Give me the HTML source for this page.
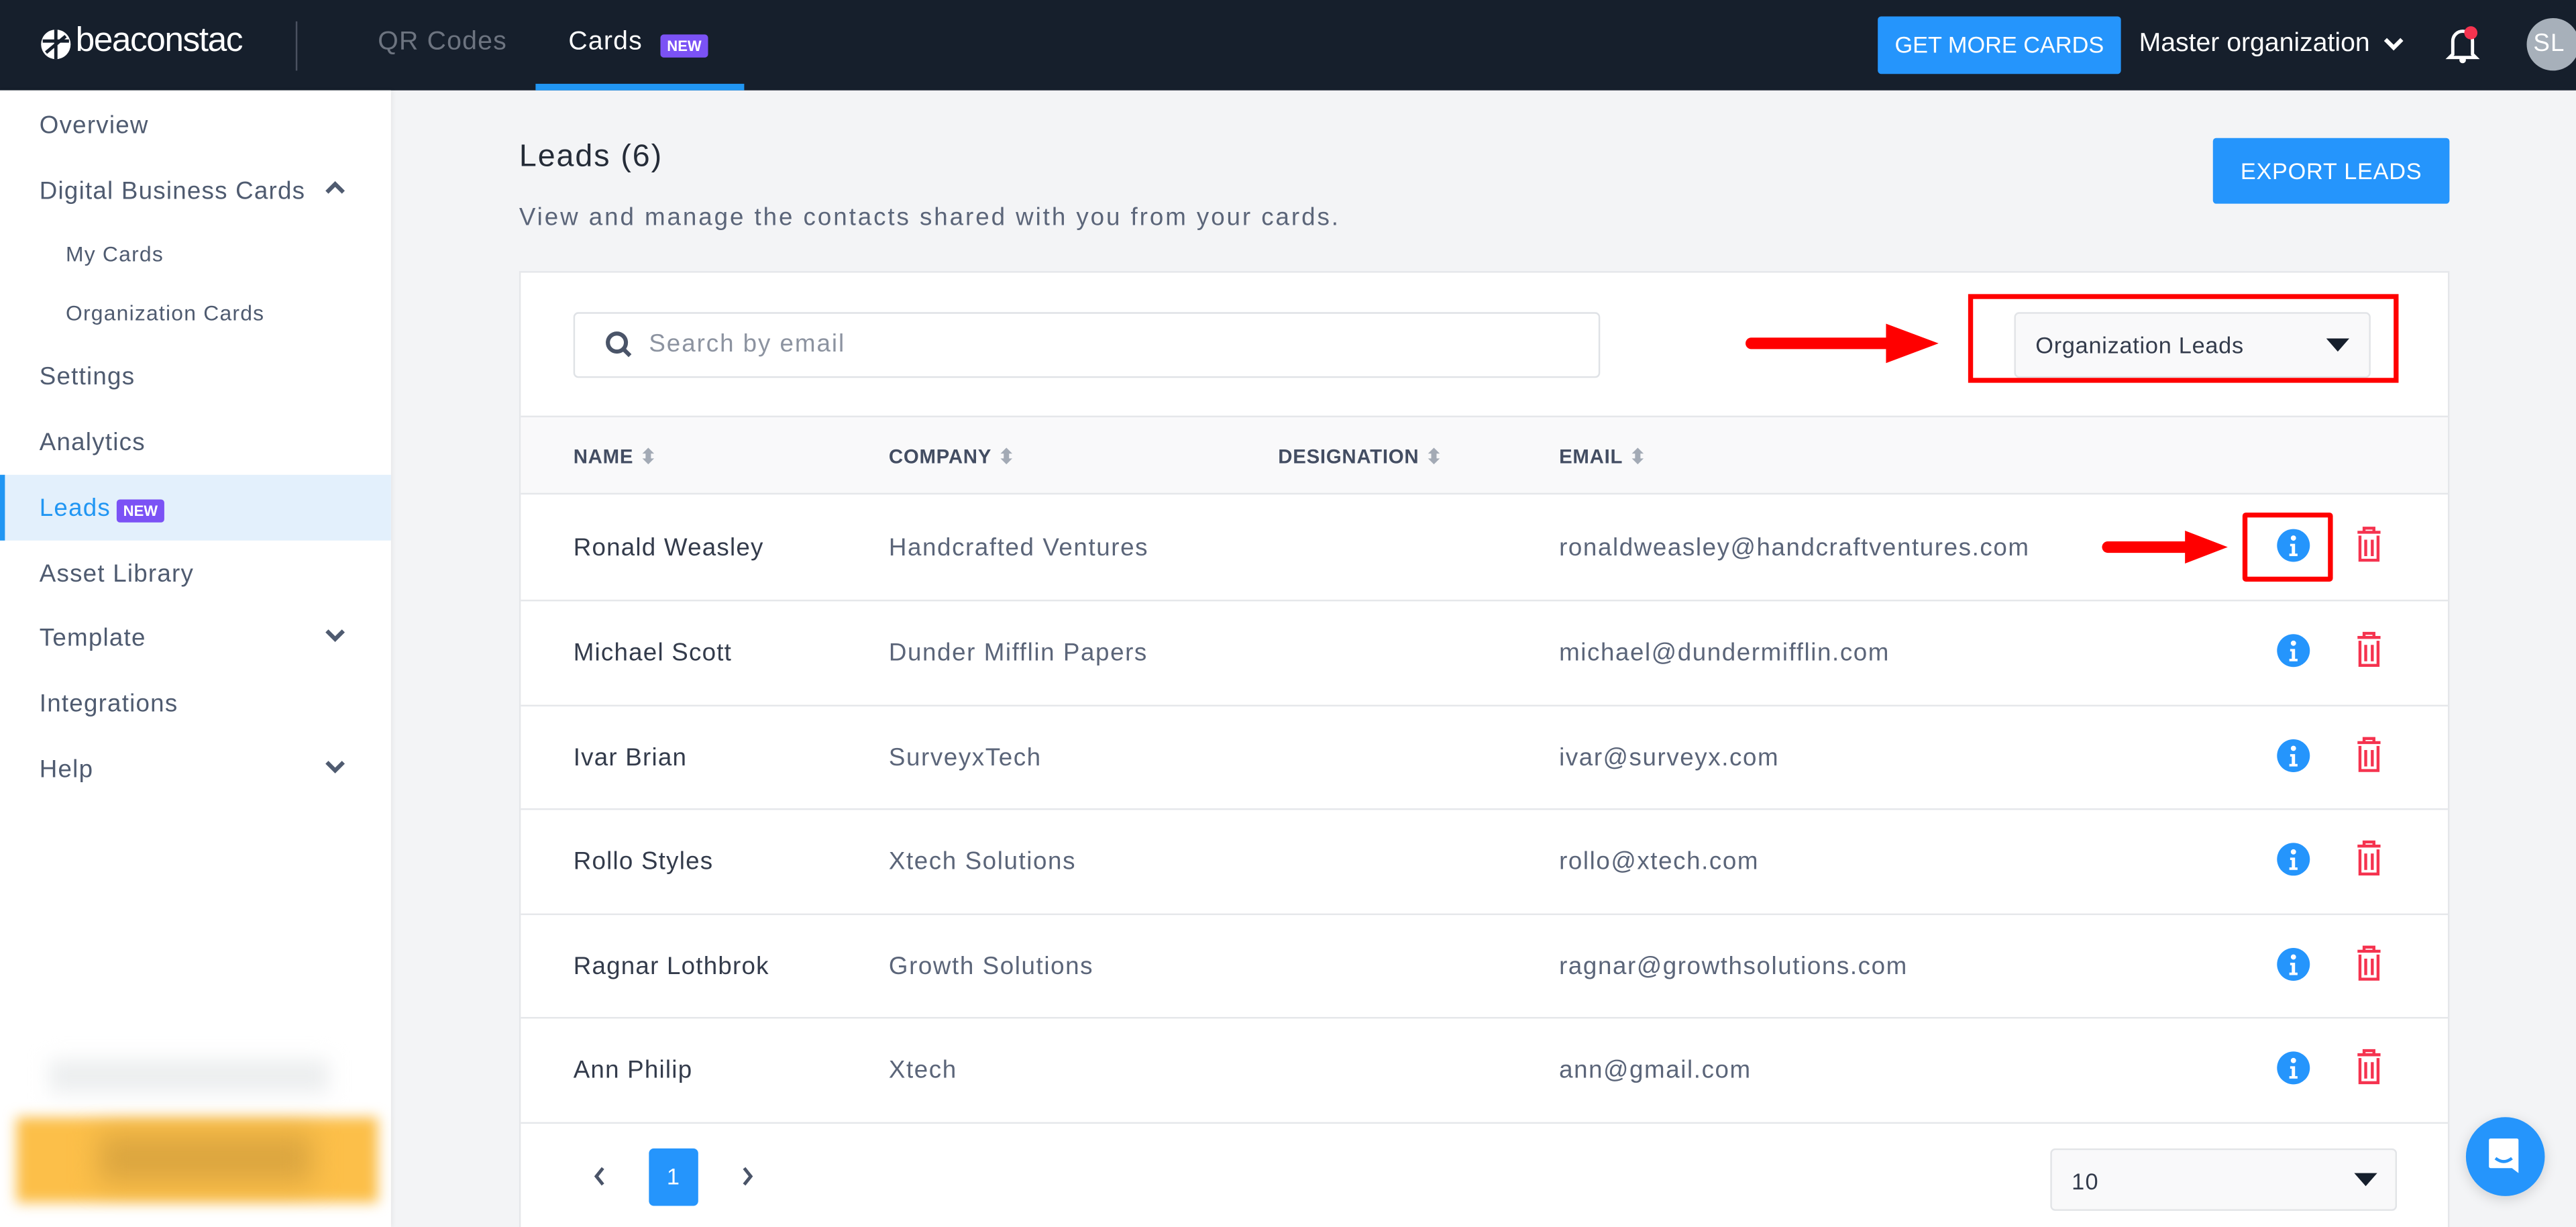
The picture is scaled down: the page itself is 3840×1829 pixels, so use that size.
<!DOCTYPE html>
<html><head><meta charset="utf-8"><style>
*{box-sizing:border-box;margin:0;padding:0}
html,body{width:3840px;height:1829px;overflow:hidden;background:#f3f4f6}
#w{position:absolute;left:0;top:0;width:1568px;height:747px;transform:scale(2.44898);transform-origin:0 0;font-family:"Liberation Sans",sans-serif;background:#f3f4f6;overflow:hidden;letter-spacing:.5px}
.a{position:absolute;white-space:nowrap}
.top{left:0;top:0;width:1568px;height:55px;background:#161f2c}
.side{left:0;top:55px;width:238px;height:692px;background:#fff;box-shadow:1px 0 3px rgba(0,0,0,.06)}
.si{font-size:15px;color:#4f5b70}
.ss{font-size:13px;color:#4f5b70}
.hd{font-size:12px;font-weight:bold;color:#434d62;letter-spacing:.3px}
.hd span{color:#a3aab5;margin-left:4px}
.nm{font-size:15px;color:#333b4b}
.tx{font-size:15px;color:#5b6579;letter-spacing:.65px}
.badge{background:#7b52f5;color:#fff;font-size:9px;font-weight:bold;padding:2px 4px;border-radius:2px;letter-spacing:0}
</style></head><body><div id="w">
<div class="a top"></div>
<svg class="a" style="left:24px;top:16px" width="20" height="22" viewBox="0 0 20 22"><circle cx="10" cy="11" r="9" fill="#fff"/><path d="M10 2v18M2 9h16M4 16l12-10" stroke="#161f2c" stroke-width="2"/></svg>
<div class="a" style="left:46px;top:13px;font-size:21px;color:#fff;letter-spacing:-.6px">beaconstac</div>
<div class="a" style="left:180px;top:13px;width:1px;height:30px;background:#4a5160"></div>
<div class="a" style="left:230px;top:17px;font-size:16px;color:#6d7480">QR Codes</div>
<div class="a" style="left:346px;top:17px;font-size:16px;color:#fff">Cards</div>
<div class="a badge" style="left:402px;top:21px">NEW</div>
<div class="a" style="left:326px;top:51px;width:127px;height:4px;background:#2196f3"></div>
<div class="a" style="left:1143px;top:10px;width:148px;height:35px;background:#2595fc;border-radius:2px;color:#fff;font-size:14px;text-align:center;line-height:35px;letter-spacing:0">GET MORE CARDS</div>
<div class="a" style="left:1302px;top:18px;font-size:16px;color:#fff;letter-spacing:0">Master organization</div>
<svg class="a" style="left:1450px;top:22px" width="14" height="10"><path d="M2 2l5 5 5-5" stroke="#fff" stroke-width="2.5" fill="none"/></svg>
<svg class="a" style="left:1488px;top:14px" width="22" height="26" viewBox="0 0 22 26"><path d="M5 19V11a6 6 0 0112 0v8l2 2H3z" stroke="#fff" stroke-width="2" fill="none"/><circle cx="11" cy="22.5" r="2" fill="#fff"/><circle cx="16" cy="6" r="4" fill="#f5334f"/></svg>
<div class="a" style="left:1538px;top:11px;width:32px;height:32px;border-radius:50%;background:#a7b0ba;color:#fff;font-size:15px;line-height:32px;padding-left:4px">SL</div>
<div class="a side"></div>
<div class="a" style="left:0;top:289px;width:238px;height:40px;background:#e3f0fc;border-left:3px solid #2196f3"></div>
<div class="a si" style="left:24px;top:68px">Overview</div>
<div class="a si" style="left:24px;top:108px">Digital Business Cards</div>
<svg class="a" style="left:197px;top:109px" width="14" height="10"><path d="M2 8l5-5 5 5" stroke="#4f5b70" stroke-width="2.5" fill="none"/></svg>
<div class="a ss" style="left:40px;top:147px">My Cards</div>
<div class="a ss" style="left:40px;top:183px">Organization Cards</div>
<div class="a si" style="left:24px;top:221px">Settings</div>
<div class="a si" style="left:24px;top:261px">Analytics</div>
<div class="a si" style="left:24px;top:301px;color:#2196f3">Leads</div>
<div class="a badge" style="left:71px;top:304px">NEW</div>
<div class="a si" style="left:24px;top:341px">Asset Library</div>
<div class="a si" style="left:24px;top:380px">Template</div>
<svg class="a" style="left:197px;top:382px" width="14" height="10"><path d="M2 2l5 5 5-5" stroke="#4f5b70" stroke-width="2.5" fill="none"/></svg>
<div class="a si" style="left:24px;top:420px">Integrations</div>
<div class="a si" style="left:24px;top:460px">Help</div>
<svg class="a" style="left:197px;top:462px" width="14" height="10"><path d="M2 2l5 5 5-5" stroke="#4f5b70" stroke-width="2.5" fill="none"/></svg>
<div class="a" style="left:30px;top:645px;width:170px;height:20px;background:#eceeef;filter:blur(6px)"></div>
<div class="a" style="left:10px;top:680px;width:220px;height:52px;background:#fcbf49;filter:blur(4px)"></div>
<div class="a" style="left:60px;top:690px;width:130px;height:30px;background:#dca640;filter:blur(8px)"></div>

<div class="a" style="left:316px;top:85px;font-size:19px;color:#252c38;letter-spacing:.8px">Leads (6)</div>
<div class="a" style="left:316px;top:124px;font-size:15px;color:#5b6579;letter-spacing:1.2px">View and manage the contacts shared with you from your cards.</div>
<div class="a" style="left:1347px;top:84px;width:144px;height:40px;background:#2595fc;border-radius:2px;color:#fff;font-size:14px;text-align:center;line-height:40px;letter-spacing:.3px">EXPORT LEADS</div>

<div class="a" style="left:316px;top:165px;width:1175px;height:600px;background:#fff;border:1px solid #e5e7ea"></div>
<div class="a" style="left:349px;top:190px;width:625px;height:40px;border:1px solid #dfe2e6;border-radius:3px;background:#fff"></div>
<svg class="a" style="left:368px;top:201px" width="18" height="18"><circle cx="7.5" cy="7.5" r="5.5" stroke="#4a5468" stroke-width="2.5" fill="none"/><path d="M11.5 11.5l4 4" stroke="#4a5468" stroke-width="2.5"/></svg>
<div class="a" style="left:395px;top:201px;font-size:15px;color:#8c93a0;letter-spacing:.8px">Search by email</div>
<div class="a" style="left:1226px;top:190px;width:217px;height:40px;border:1px solid #e2e4e7;border-radius:3px;background:#f9f9fa"></div>
<div class="a" style="left:1239px;top:202px;font-size:14px;color:#333b4b;letter-spacing:.3px">Organization Leads</div>
<svg class="a" style="left:1415px;top:205px" width="16" height="10"><path d="M1 1h14l-7 8z" fill="#161f2c"/></svg>
<div class="a" style="left:1198px;top:179px;width:262px;height:54px;border:3px solid #f00"></div>
<svg class="a" style="left:1060px;top:196px" width="124" height="26"><path d="M6 13h86" stroke="#f00" stroke-width="7" stroke-linecap="round"/><path d="M88 1l32 12-32 12z" fill="#f00"/></svg>

<div class="a" style="left:317px;top:253px;width:1173px;height:48px;background:#f9f9fa;border-top:1px solid #e5e7ea;border-bottom:1px solid #e5e7ea"></div>
<div class="a hd" style="left:349px;top:271px">NAME<span>⬍</span></div>
<div class="a hd" style="left:541px;top:271px">COMPANY<span>⬍</span></div>
<div class="a hd" style="left:778px;top:271px">DESIGNATION<span>⬍</span></div>
<div class="a hd" style="left:949px;top:271px">EMAIL<span>⬍</span></div>

<div class="a" style="left:317px;top:365px;width:1173px;height:1px;background:#e5e7ea"></div>
<div class="a" style="left:317px;top:429px;width:1173px;height:1px;background:#e5e7ea"></div>
<div class="a" style="left:317px;top:492px;width:1173px;height:1px;background:#e5e7ea"></div>
<div class="a" style="left:317px;top:556px;width:1173px;height:1px;background:#e5e7ea"></div>
<div class="a" style="left:317px;top:619px;width:1173px;height:1px;background:#e5e7ea"></div>
<div class="a" style="left:317px;top:683px;width:1173px;height:1px;background:#e5e7ea"></div>

<div class="a nm" style="left:349px;top:325px">Ronald Weasley</div><div class="a tx" style="left:541px;top:325px">Handcrafted Ventures</div><div class="a tx" style="left:949px;top:325px">ronaldweasley@handcraftventures.com</div>
<div class="a nm" style="left:349px;top:389px">Michael Scott</div><div class="a tx" style="left:541px;top:389px">Dunder Mifflin Papers</div><div class="a tx" style="left:949px;top:389px">michael@dundermifflin.com</div>
<div class="a nm" style="left:349px;top:453px">Ivar Brian</div><div class="a tx" style="left:541px;top:453px">SurveyxTech</div><div class="a tx" style="left:949px;top:453px">ivar@surveyx.com</div>
<div class="a nm" style="left:349px;top:516px">Rollo Styles</div><div class="a tx" style="left:541px;top:516px">Xtech Solutions</div><div class="a tx" style="left:949px;top:516px">rollo@xtech.com</div>
<div class="a nm" style="left:349px;top:580px">Ragnar Lothbrok</div><div class="a tx" style="left:541px;top:580px">Growth Solutions</div><div class="a tx" style="left:949px;top:580px">ragnar@growthsolutions.com</div>
<div class="a nm" style="left:349px;top:643px">Ann Philip</div><div class="a tx" style="left:541px;top:643px">Xtech</div><div class="a tx" style="left:949px;top:643px">ann@gmail.com</div>

<svg class="a" style="left:1380px;top:312px" width="80" height="360" viewBox="0 0 80 360">
<defs><g id="ic"><circle cx="16" cy="0" r="10" fill="#2595fc"/><circle cx="16" cy="-4.5" r="1.6" fill="#fff"/><path d="M14 -1h3v6h1.5v1.5h-5V5h1.5v-4.5H14z" fill="#fff"/><path d="M55 -8h14M59 -8v-2.5h6v2.5M56.5 -6v15h11v-15M60 -3.5v10M64 -3.5v10" stroke="#f5334f" stroke-width="1.8" fill="none"/></g></defs>
<use href="#ic" y="20"/><use href="#ic" y="84"/><use href="#ic" y="148"/><use href="#ic" y="211"/><use href="#ic" y="275"/><use href="#ic" y="338"/>
</svg>
<div class="a" style="left:1365px;top:312px;width:55px;height:42px;border:3px solid #f00;border-radius:2px"></div>
<svg class="a" style="left:1278px;top:320px" width="80" height="26"><path d="M5 13h50" stroke="#f00" stroke-width="7" stroke-linecap="round"/><path d="M52 3l26 10-26 10z" fill="#f00"/></svg>

<svg class="a" style="left:360px;top:709px" width="10" height="14"><path d="M7 2l-4 5 4 5" stroke="#4a5468" stroke-width="2" fill="none"/></svg>
<div class="a" style="left:395px;top:699px;width:30px;height:35px;background:#2595fc;border-radius:3px;color:#fff;font-size:14px;text-align:center;line-height:35px">1</div>
<svg class="a" style="left:450px;top:709px" width="10" height="14"><path d="M3 2l4 5-4 5" stroke="#4a5468" stroke-width="2" fill="none"/></svg>
<div class="a" style="left:1248px;top:699px;width:211px;height:38px;border:1px solid #e2e4e7;border-radius:3px;background:#f9f9fa"></div>
<div class="a" style="left:1261px;top:711px;font-size:14px;color:#333b4b">10</div>
<svg class="a" style="left:1432px;top:713px" width="16" height="10"><path d="M1 1h14l-7 8z" fill="#161f2c"/></svg>
<div class="a" style="left:1501px;top:680px;width:48px;height:48px;border-radius:50%;background:#2595fc;box-shadow:0 2px 8px rgba(0,0,0,.15)"></div>
<svg class="a" style="left:1513px;top:691px" width="24" height="26"><path d="M3 2h16a1 1 0 011 1v20l-4-3H3a1 1 0 01-1-1V3a1 1 0 011-1z" fill="#fff"/><path d="M6 14q5 4 10 0" stroke="#2595fc" stroke-width="1.8" fill="none"/></svg>
</div></body></html>
